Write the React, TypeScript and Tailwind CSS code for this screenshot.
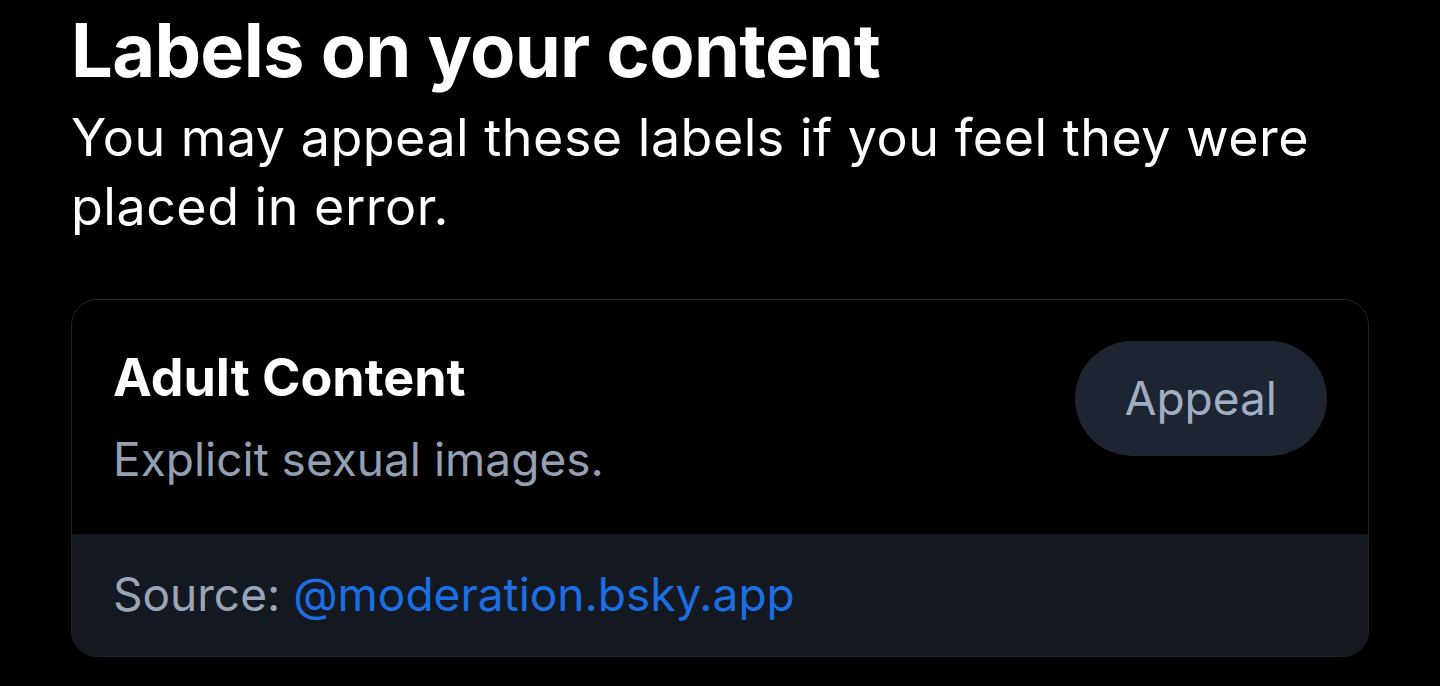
export default function App() {
  return (
    <div
      className="min-h-screen w-full bg-black text-white"
      style={{ fontFamily: 'Inter, "Noto Sans", sans-serif' }}
    >
      <div className="px-[71px] pt-[10px]">
        {/* Header */}
        <h1 className="text-[74px] font-bold leading-[80px] tracking-[-0.7px]">
          Labels on your content
        </h1>
        <p className="mt-[13px] text-[52px] leading-[69px] tracking-[0.5px]">
          You may appeal these labels if you feel they were placed in error.
        </p>

        {/* Label card */}
        <div className="mt-[58px] overflow-hidden rounded-[26px] border border-[#1f2430]">
          <div className="flex items-start justify-between pl-[41px] pr-[41px] pt-[41px] pb-[47px]">
            <div className="mt-[7px] flex flex-col">
              <span className="text-[52px] font-bold leading-[60px]">Adult Content</span>
              <span className="mt-[23px] text-[46px] leading-[56px] text-[#939fb3]">
                Explicit sexual images.
              </span>
            </div>
            <button className="h-[115px] rounded-full bg-[#1e2532] px-[50px] text-[46px] text-[#a0adc2]">
              Appeal
            </button>
          </div>
          <div className="bg-[#141921] px-[41px] pt-[34px] pb-[36px] text-[46px] leading-[52px]">
            <span className="text-[#9aa5b8]">Source: </span>
            <span className="text-[#1b6fe3]">@moderation.bsky.app</span>
          </div>
        </div>
      </div>
    </div>
  )
}
